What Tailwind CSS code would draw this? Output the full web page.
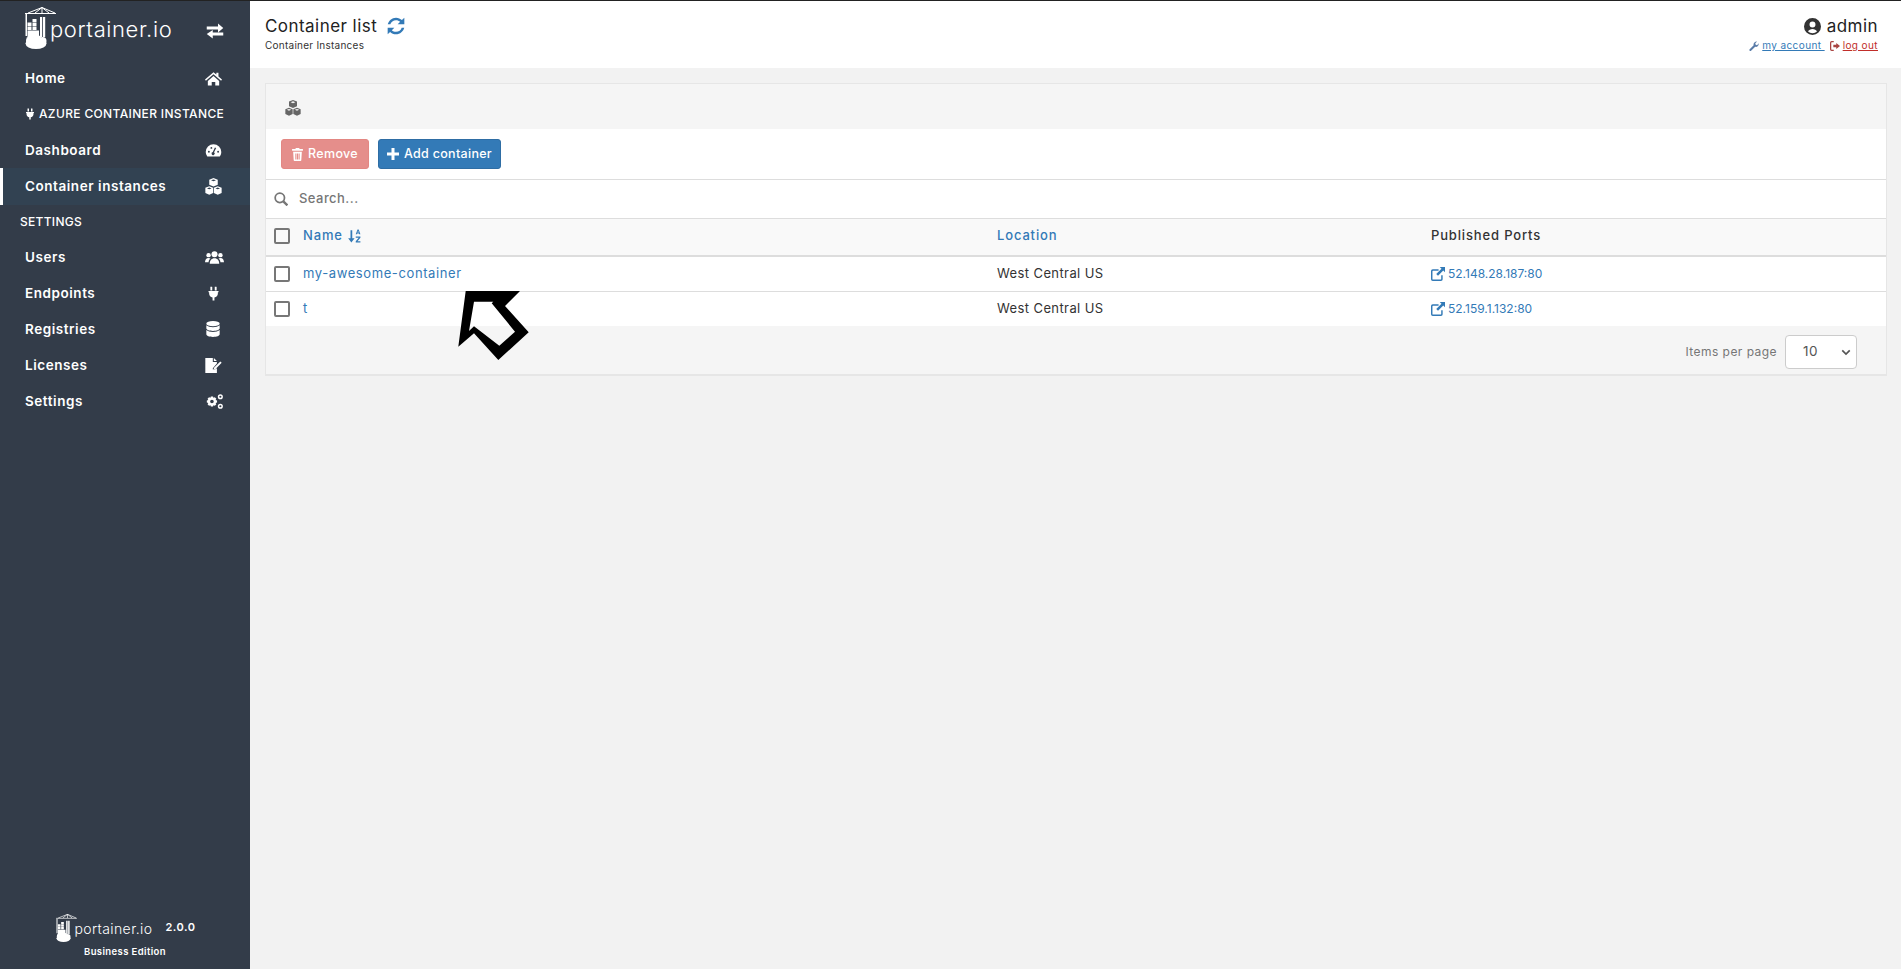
<!DOCTYPE html>
<html lang="en">
<head>
<meta charset="UTF-8" />
<title>Portainer - Container list</title>
<script src="https://cdn.jsdelivr.net/npm/@tailwindcss/browser@4"></script>
</head>
<body class="bg-[#f2f2f2] font-['Inter',sans-serif] text-[13px] tracking-[0.45px] text-[#333] overflow-hidden h-screen">

<!-- icon sprites, used in the sidebar and the panel -->
<svg class="hidden">
  <symbol id="i-cubes" viewBox="0 0 24 24"><path fill-rule="evenodd" d="M12 0l6 2.300v7.200l-6 2.500-6-2.500V2.300zM12 2l-3.500 1.300L12 4.700l3.500-1.400zM6 11.500l5.500 2.200v7.300L6 23.500.5 21v-7.300zM6 13.500l-3.200 1.200L6 16l3.200-1.300zM18 11.500l5.500 2.200v7.300L18 23.500 12.500 21v-7.300zM18 13.500l-3.200 1.200L18 16l3.200-1.300z"/></symbol>
  <symbol id="i-plug" viewBox="0 0 24 24"><path d="M7 1h2.500a.5.500 0 0 1 .5.500V7H7zM14 1h2.500a.5.500 0 0 1 .5.500V7h-3zM4 8h16v2h-1v2c0 3.500-2.500 6-5.500 6.500V23h-3v-4.500C7.500 18 5 15.500 5 12v-2H4z"/></symbol>
  <symbol id="i-logo" viewBox="0 0 31 42">
    <path fill="none" stroke="currentColor" d="M0 6.500h31M3 6L17 .5 30 6M17 0v6M10 6l7-5.500L24 6"/>
    <path d="M.5 7H2v22H.5zM15 10h2.200v20H15zM18 10h2.200v20H18z"/>
    <path d="M7.500 12h4v3h-4zM2.500 15.500h4v3.500h-4zM7.500 15.500h4v3.500h-4zM2.500 19.500h4v3.500h-4zM7.500 19.500h4v3.500h-4zM2.500 23.500H14V30H2.500z"/>
    <ellipse cx="11" cy="36.500" rx="10.500" ry="5.500"/><circle cx="5.500" cy="33.500" r="4.500"/><circle cx="12" cy="32.500" r="4.500"/><circle cx="17.500" cy="34" r="4"/>
  </symbol>
</svg>

<div class="flex h-screen border-t border-[#222]">
  <!-- sidebar -->
  <aside class="w-[250px] shrink-0 bg-[#333c49] text-white flex flex-col font-semibold text-[13.5px] tracking-[0.55px]">
    <div class="h-[59px] flex items-center justify-between pl-[25px] pr-[26px]">
      <div class="flex items-start self-start">
        <svg class="w-[31px] h-[42px] text-white fill-current mt-[6px]"><use href="#i-logo"/></svg>
        <span class="text-[22px] font-light tracking-[0.6px] mt-[12px] ml-[-6px]">portainer.io</span>
      </div>
      <svg class="w-[18px] h-[18px] fill-white mt-[1px]" viewBox="0 0 24 24"><path d="M1 6h15V2l7 6-7 6v-4H1zM23 14v4H9v4l-8-6 8-5.500V14z" fill-rule="evenodd"/></svg>
    </div>
    <nav class="flex flex-col">
      <a class="h-[36px] flex items-center justify-between pl-[25px] pr-[28px]">Home
        <svg class="w-[17px] h-[17px] fill-white" viewBox="0 0 24 24"><path d="M12 3l4 3.500V4h3v5l5 4.500-1.300 1.500L12 6 1.300 15 0 13.500zM4 15.500L12 8.500l8 7V22h-5.500v-5h-5v5H4z"/></svg>
      </a>
      <div class="h-[36px] flex items-center pl-[24px] text-[12px] font-medium tracking-[0.35px] gap-[3px]">
        <svg class="w-[12px] h-[14px] fill-white"><use href="#i-plug"/></svg>AZURE CONTAINER INSTANCE
      </div>
      <a class="h-[36px] flex items-center justify-between pl-[25px] pr-[28px]">Dashboard
        <svg class="w-[17px] h-[17px] fill-white" viewBox="0 0 24 24"><path d="M12 3a11 11 0 0 1 11 11c0 2.500-.8 4.700-2.200 6.500H3.200A11 11 0 0 1 1 14 11 11 0 0 1 12 3zm3.800 5.500l-3 6a2.200 2.200 0 1 1-1.800-.4l3-6.400zM5.500 12.500a1.300 1.300 0 1 0 0 2.600 1.300 1.300 0 0 0 0-2.600zM18.500 12.500a1.300 1.300 0 1 0 0 2.600 1.300 1.300 0 0 0 0-2.600zM9 7a1.300 1.300 0 1 0 0 2.600A1.300 1.300 0 0 0 9 7z" fill-rule="evenodd"/></svg>
      </a>
      <a class="h-[37px] flex items-center justify-between pl-[22px] pr-[28px] bg-[#324252] border-l-[3px] border-white">Container instances
        <svg class="w-[17px] h-[17px] fill-white"><use href="#i-cubes"/></svg>
      </a>
      <div class="h-[34px] flex items-center pl-[20px] text-[12px] font-medium tracking-[0.3px]">SETTINGS</div>
      <a class="h-[36px] flex items-center justify-between pl-[25px] pr-[26px]">Users
        <svg class="w-[19px] h-[17px] fill-white" viewBox="0 0 24 20"><circle cx="12" cy="6" r="3.800"/><circle cx="4.500" cy="7" r="2.800"/><circle cx="19.500" cy="7" r="2.800"/><path d="M6 18c0-4 2-7 6-7s6 3 6 7zM0 16c0-3 1.500-5.500 4.500-5.500 1 0 1.800.3 2.500.8C5.500 12.500 4.700 14 4.500 16zM24 16c0-3-1.500-5.500-4.500-5.500-1 0-1.800.3-2.500.8 1.500 1.200 2.300 2.700 2.500 4.700z"/></svg>
      </a>
      <a class="h-[36px] flex items-center justify-between pl-[25px] pr-[29px]">Endpoints
        <svg class="w-[15px] h-[17px] fill-white"><use href="#i-plug"/></svg>
      </a>
      <a class="h-[36px] flex items-center justify-between pl-[25px] pr-[30px]">Registries
        <svg class="w-[14px] h-[16px] fill-white" viewBox="0 0 20 24"><ellipse cx="10" cy="4" rx="10" ry="4"/><path d="M0 6.500c2 2 6 3 10 3s8-1 10-3V11c0 2.200-4.500 4-10 4S0 13.200 0 11zM0 13.500c2 2 6 3 10 3s8-1 10-3V20c0 2.200-4.500 4-10 4S0 22.200 0 20z"/></svg>
      </a>
      <a class="h-[36px] flex items-center justify-between pl-[25px] pr-[28px]">Licenses
        <svg class="w-[17px] h-[15px] fill-white" viewBox="0 0 24 22"><path d="M0 0h11v6h6v2l-6 7v2h3l3-2v7H0zM12.500 0l4.500 4.500h-4.500zM4 18c2-2 3-3 4-3s1 2 2 2h1v1H9c-1 0-1-1.500-2-1l-2 1.500zM22 5l2 2-9 9-3 1 1-3z"/></svg>
      </a>
      <a class="h-[36px] flex items-center justify-between pl-[25px] pr-[26px]">Settings
        <svg class="w-[19px] h-[15px] fill-white" viewBox="0 0 26 20"><path d="M8 3h3l.5 2 2-.8 2 2-1 1.800 2 .5v3l-2 .5 1 1.800-2 2-2-.8-.5 2H8l-.5-2-2 .8-2-2 1-1.800-2-.5v-3l2-.5-1-1.800 2-2 2 .8zM9.500 7.500a2.500 2.500 0 1 0 0 5 2.500 2.500 0 0 0 0-5z" fill-rule="evenodd"/><path d="M21 0a3.500 3.500 0 1 1 0 7 3.500 3.500 0 0 1 0-7zm0 2a1.500 1.500 0 1 0 0 3 1.500 1.500 0 0 0 0-3zM21 13a3.500 3.500 0 1 1 0 7 3.500 3.500 0 0 1 0-7zm0 2a1.500 1.500 0 1 0 0 3 1.500 1.500 0 0 0 0-3z" fill-rule="evenodd"/></svg>
      </a>
    </nav>
    <div class="mt-auto h-[55px] flex flex-col items-center">
      <div class="flex items-start ml-[2px]">
        <svg class="w-[21px] h-[28px] text-white fill-current"><use href="#i-logo"/></svg>
        <span class="text-[14px] font-light tracking-[0.4px] mt-[4px] ml-[-3px]">portainer.io</span>
        <span class="text-[11px] font-semibold ml-[13px] mt-[5px]">2.0.0</span>
      </div>
      <div class="text-[9.500px] font-semibold tracking-[0.4px] mt-[3px]">Business Edition</div>
    </div>
  </aside>

  <main class="flex-1 min-w-0">
    <!-- page header -->
    <header class="h-[67px] bg-white flex justify-between pl-[15px] pr-[23px]">
      <div>
        <div class="flex items-center mt-[14px] text-[17px] font-normal text-[#222] leading-[22px] gap-[9px]">Container list
          <svg class="w-[20px] h-[20px] fill-[#337ab7]" viewBox="0 0 24 24"><path d="M12 2c2.800 0 5.300 1.100 7.100 2.900L22 2v8h-8l3-3c-1.300-1.300-3.100-2-5-2-3.300 0-6 2.100-6.800 5H2.100C3 5.900 7.100 2 12 2zM2 14h8l-3 3c1.300 1.300 3.100 2 5 2 3.300 0 6-2.100 6.800-5h3.100C21 18.100 16.900 22 12 22c-2.800 0-5.300-1.100-7.100-2.900L2 22z"/></svg>
        </div>
        <div class="text-[10px] tracking-[0.25px] mt-[1px] text-[#333]">Container Instances</div>
      </div>
      <div class="text-right">
        <div class="flex items-center justify-end mt-[14px] text-[17px] text-[#222] leading-[22px] gap-[6px]">
          <svg class="w-[17px] h-[17px] fill-[#333]" viewBox="0 0 24 24"><path d="M12 0a12 12 0 1 1 0 24 12 12 0 0 1 0-24zm0 5a4.200 4.200 0 1 0 0 8.400A4.200 4.200 0 0 0 12 5zm0 10.500c-2.800 0-5.200 1.300-6.500 3.300A9.500 9.500 0 0 0 12 21.500c2.500 0 4.800-1 6.500-2.700-1.300-2-3.700-3.300-6.500-3.300z" fill-rule="evenodd"/></svg>admin
        </div>
        <div class="flex items-center justify-end text-[10px] tracking-[0.4px] mt-[1px] gap-[5px]">
          <a class="flex items-center text-[#337ab7] underline">
            <svg class="w-[10px] h-[10px] fill-[#5a7ca8] mr-[3px]" viewBox="0 0 24 24"><path d="M23 5.500c.6 3-.2 5.500-2.200 7.200-1.600 1.400-3.800 1.800-6 1.200L5 23.500c-1 .9-2.500.8-3.400-.1-.9-1-.9-2.400 0-3.400l9.600-9.800c-.6-2.200-.2-4.400 1.200-6C14.200 2.300 16.600 1.400 19 1.500L15 5.500l1 3.500 3.500 1z"/></svg>my account&nbsp;</a>
          <a class="flex items-center text-[#c12e2a] underline">
            <svg class="w-[10px] h-[10px] fill-[#a94442] mr-[3px]" viewBox="0 0 24 24"><path d="M15 5l9 7-9 7v-4H8V9h7zM9 3H4a1 1 0 0 0-1 1v16a1 1 0 0 0 1 1h5v3H4a4 4 0 0 1-4-4V4a4 4 0 0 1 4-4h5z"/></svg>log out</a>
        </div>
      </div>
    </header>

    <!-- container list panel -->
    <section class="mt-[15px] ml-[15px] mr-[14px] border border-[#e6e6e6] border-b-[2px] bg-[#f5f5f5]">
      <div class="h-[45px] flex items-center pl-[19px] pt-[2px]">
        <svg class="w-[16px] h-[16px] fill-[#666]"><use href="#i-cubes"/></svg>
      </div>
      <div class="h-[50px] bg-white flex items-center pl-[15px] gap-[9px] text-[12.500px] tracking-[0.3px] font-medium">
        <button class="h-[30px] w-[88px] flex items-center justify-center gap-[5px] rounded-[3px] bg-[#e58e8b] text-white border border-[#e38783]">
          <svg class="w-[11px] h-[13px] fill-white" viewBox="0 0 20 24"><path d="M7 0h6l1 2h6v3H0V2h6zM2 7h16l-1 15.500c0 .8-.7 1.500-1.500 1.500h-11C3.700 24 3 23.300 3 22.500zM6 10v11h2V10zM9 10v11h2V10zM12 10v11h2V10z" fill-rule="evenodd"/></svg>Remove</button>
        <button class="h-[30px] w-[123px] flex items-center justify-center gap-[5px] rounded-[3px] bg-[#337ab7] text-white border border-[#2e6da4]">
          <svg class="w-[12px] h-[12px] fill-white" viewBox="0 0 12 12"><path d="M4.500 0h3v4.500H12v3H7.500V12h-3V7.500H0v-3h4.500z"/></svg>Add container</button>
      </div>
      <div class="h-[39px] bg-white border-t-[1.5px] border-[#ddd] flex items-center pl-[8px] gap-[11px] text-[#767676] font-medium">
        <svg class="w-[14px] h-[14px] fill-none stroke-[#767676] stroke-[3]" viewBox="0 0 24 24"><circle cx="10" cy="10" r="8"/><path d="M16 16l7 7" stroke-width="4"/></svg>
        <span>Search...</span>
      </div>
      <div class="h-[39px] pb-[2px] bg-[#f9f9f9] border-t-[1.5px] border-b-[2px] border-[#ddd] grid grid-cols-[731px_434px_1fr] items-center font-medium tracking-[0.85px]">
        <div class="flex items-center pl-[8px]">
          <span class="w-[16px] h-[16px] border-2 border-[#777] rounded-[2px] mr-[13px]"></span>
          <a class="text-[#337ab7] flex items-center gap-[4px]">Name
            <svg class="w-[14px] h-[14px] fill-[#337ab7]" viewBox="0 0 24 24"><path d="M6 2h3v14h4l-5.500 7L2 16h4zM18 1h2l3 8h-2l-.5-1.500h-3L17 9h-2zM19 3l-1 3h2zM15 13h8v2l-5 6h5v2h-8v-2l5-6h-5z"/></svg>
          </a>
        </div>
        <a class="text-[#337ab7]">Location</a>
        <span class="text-[#333]">Published Ports</span>
      </div>
      <div class="h-[35px] bg-white border-b-[1.5px] border-[#ddd] grid grid-cols-[731px_434px_1fr] items-center">
        <div class="flex items-center pl-[8px]">
          <span class="w-[16px] h-[16px] border-2 border-[#777] rounded-[2px] mr-[13px]"></span>
          <a class="text-[#337ab7] tracking-[0.6px]">my-awesome-container</a>
        </div>
        <span class="tracking-[0.4px]">West Central US</span>
        <a class="text-[#337ab7] flex items-center gap-[3px] text-[12px] tracking-[0px]">
          <svg class="w-[14px] h-[14px] fill-[#337ab7]" viewBox="0 0 24 24"><path d="M3 4h10v2.500H3.500a1 1 0 0 0-1 1v13a1 1 0 0 0 1 1h13a1 1 0 0 0 1-1V14H20v7a3 3 0 0 1-3 3H3a3 3 0 0 1-3-3V7a3 3 0 0 1 3-3zM15 0h9v9l-3-3-9 9-3-3 9-9z"/></svg>52.148.28.187:80</a>
      </div>
      <div class="h-[34px] bg-white grid grid-cols-[731px_434px_1fr] items-center">
        <div class="flex items-center pl-[8px]">
          <span class="w-[16px] h-[16px] border-2 border-[#777] rounded-[2px] mr-[13px]"></span>
          <a class="text-[#337ab7]">t</a>
        </div>
        <span class="tracking-[0.4px]">West Central US</span>
        <a class="text-[#337ab7] flex items-center gap-[3px] text-[12px] tracking-[0px]">
          <svg class="w-[14px] h-[14px] fill-[#337ab7]" viewBox="0 0 24 24"><path d="M3 4h10v2.500H3.500a1 1 0 0 0-1 1v13a1 1 0 0 0 1 1h13a1 1 0 0 0 1-1V14H20v7a3 3 0 0 1-3 3H3a3 3 0 0 1-3-3V7a3 3 0 0 1 3-3zM15 0h9v9l-3-3-9 9-3-3 9-9z"/></svg>52.159.1.132:80</a>
      </div>
      <div class="h-[48px] pt-[3px] flex items-center justify-end pr-[29px] gap-[8px] text-[12px] text-[#767676]">
        <span>Items per page</span>
        <div class="w-[72px] h-[34px] bg-white border border-[#ccc] rounded-[4px] flex items-center justify-between pl-[17px] pr-[5px] text-[13.500px] text-[#555]">
          10
          <svg class="w-[10px] h-[10px] fill-none stroke-[#555] stroke-[4]" viewBox="0 0 24 24"><path d="M3 8l9 9 9-9"/></svg>
        </div>
      </div>
    </section>
  </main>
</div>

<!-- annotation arrow drawn over the table -->
<svg class="absolute left-[455px] top-[288px] w-[80px] h-[76px]" viewBox="455 288 80 76">
  <path fill="#000" fill-rule="evenodd" d="M465.700 291H520L505 306L528.700 332.300L498.300 360L474 333.300L458.300 346.700ZM474 301.700L469 331L474 326.300L499.300 345.700L515 331.700L491.700 303.300L493.300 301.700Z"/>
</svg>
</body>
</html>
